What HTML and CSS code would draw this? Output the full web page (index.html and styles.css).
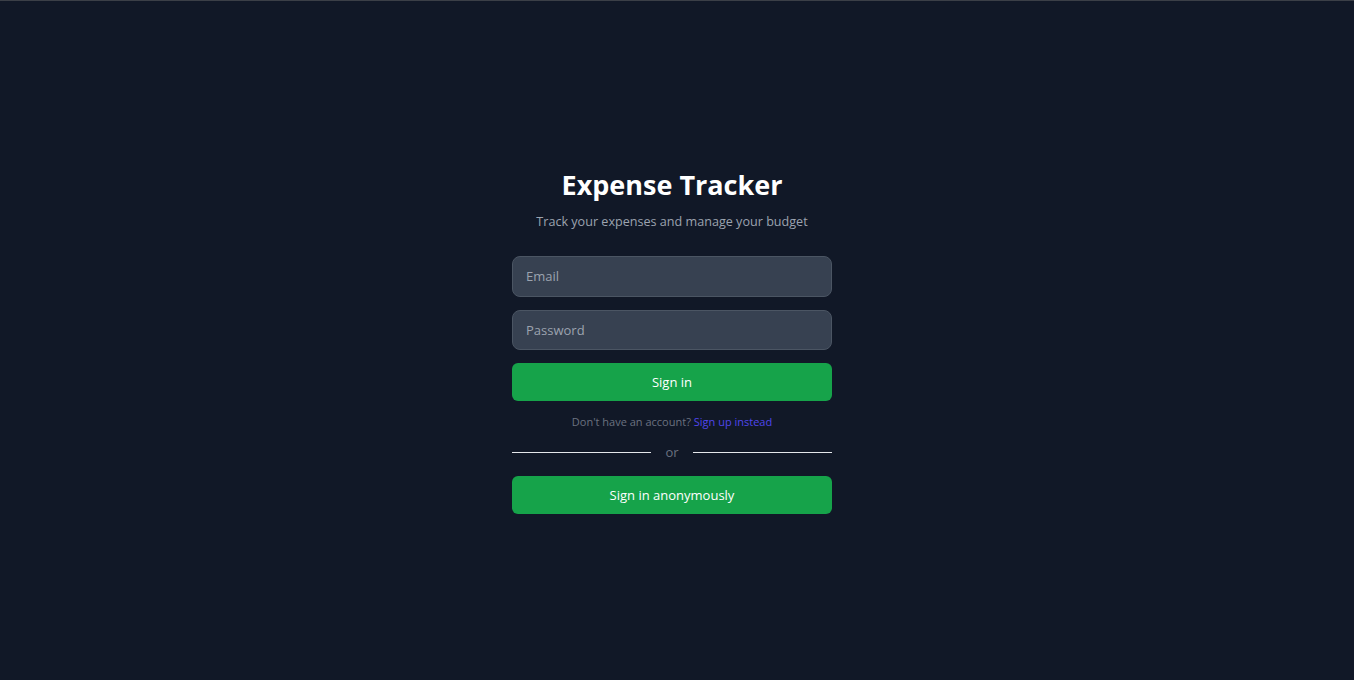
FILE: index.html
```html
<!DOCTYPE html>
<html lang="en">
<head>
<meta charset="utf-8">
<title>Expense Tracker</title>
<link rel="stylesheet" href="styles.css">
</head>
<body>
<main class="page">
  <div class="card">
    <h1 class="title">Expense Tracker</h1>
    <p class="subtitle">Track your expenses and manage your budget</p>
    <form class="form">
      <input class="field" type="email" placeholder="Email">
      <input class="field" type="password" placeholder="Password">
      <button class="btn" type="button">Sign in</button>
      <p class="switch">Don't have an account? <a class="link" href="#">Sign up instead</a></p>
    </form>
    <div class="divider"><span class="line"></span><span class="or">or</span><span class="line"></span></div>
    <button class="btn" type="button">Sign in anonymously</button>
  </div>
</main>
</body>
</html>
```
FILE: styles.css
```css
html, body { margin: 0; padding: 0; }
body {
  background: #111827;
  border-top: 1px solid #3b3f47;
  font-family: "Open Sans", "Noto Sans", sans-serif;
  color: #fff;
}
.page {
  min-height: 679px;
  box-sizing: border-box;
  padding-right: 10px;
  display: flex;
  align-items: center;
  justify-content: center;
}
.card {
  width: 320px;
  display: flex;
  flex-direction: column;
}
.title {
  margin: 0;
  font-size: 27px;
  line-height: 36px;
  font-weight: 700;
  text-align: center;
}
.subtitle {
  margin: 9px 0 0;
  font-size: 12.6px;
  line-height: 20px;
  color: #9ca3af;
  text-align: center;
}
.form {
  margin-top: 24px;
  display: flex;
  flex-direction: column;
  gap: 13px;
}
.field {
  box-sizing: border-box;
  height: 40.5px;
  padding: 0 13px;
  background: #374151;
  border: 1px solid #4b5563;
  border-radius: 8px;
  color: #fff;
  font-family: inherit;
  font-size: 13px;
  outline: none;
}
.field::placeholder { color: #9ca3af; }
.btn {
  height: 38px;
  border: none;
  border-radius: 6px;
  background: #16a34a;
  color: #fff;
  font-family: inherit;
  font-size: 13px;
}
.switch {
  margin: 0;
  text-align: center;
  font-size: 11px;
  line-height: 16px;
  color: #6b7280;
}
.link { color: #5046ec; text-decoration: none; }
.divider {
  display: flex;
  align-items: center;
  margin: 12px 0 14px;
  gap: 12px;
}
.line { flex: 1; height: 1px; background: #e5e7eb; }
.or { color: #6b7280; font-size: 13px; line-height: 20px; padding: 0 2px; }
```
